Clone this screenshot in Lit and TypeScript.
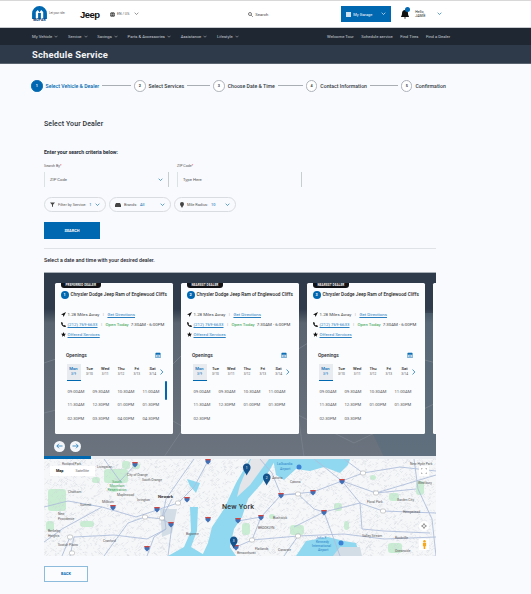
import { LitElement, html, css, svg } from "lit";
import { customElement } from "lit/decorators.js";

const chev = (c = "#fff") => html`<svg class="chev" viewBox="0 0 8 5"><path d="M1 1l3 3 3-3" fill="none" stroke=${c} stroke-width="1"/></svg>`;

function rng(seed: number) {
  let s = seed;
  return () => ((s = (s * 16807) % 2147483647) - 1) / 2147483646;
}

const W = 392, H = 97;
const water = [
  "M206 0 L192 24 L180 50 L168 68 L164 84 L158 97 L192 97 L186 88 L190 70 L198 58 L204 40 L218 24 L232 0 Z",
  "M143 20 L156 24 L152 34 L146 27 Z",
  "M146 48 L154 48 L153 72 L147 88 L162 97 L124 97 L140 88 L147 72 Z",
  "M229 0 L306 0 L304 6 L296 14 L280 8 L266 12 L252 10 L240 21 L232 16 Z",
  "M252 97 L262 82 L284 78 L300 82 L312 84 L316 97 Z",
];
const highways = [
  "M-4 86 L18 70 L58 48 L92 58 L113 51 L134 44 L150 28 L164 2", "M0 48 L24 42 L58 48", "M60 0 L76 22 L92 5",
  "M26 97 L30 78 L70 76 L103 80 L122 70 L120 55 L128 40", "M60 97 L84 64 L101 58 L118 60 L122 40 L140 14 L150 0",
  "M103 97 L110 78 L122 70", "M18 97 L26 78", "M118 60 L128 66 L124 97",
  "M194 62 L217 58 L237 36 L269 33 L298 22 L332 34 L392 16", "M208 81 L217 58",
  "M192 88 L208 81 L254 77 L300 75 L340 80 L392 78", "M237 36 L254 35 L270 50 L280 53 L296 97",
  "M250 68 L280 53 L316 44 L339 52 L392 54", "M270 0 L298 22 L316 44 L318 70 L340 72 L386 74",
  "M319 14 L298 22", "M370 0 L374 30 L388 60 L392 97", "M319 14 L356 8 L392 12", "M332 34 L372 30", "M300 0 L319 14",
  "M216 0 L228 14 L237 36", "M240 97 L254 77",
];
const greens = [[4,30,18,22],[60,10,24,14],[78,2,8,8],[2,62,8,10],[48,18,8,6],[246,66,14,10],[198,64,8,12],[290,44,8,8],[345,34,10,8],[372,22,8,14],[344,84,14,10],[36,62,14,6],[66,28,8,5],[300,62,5,9],[88,4,8,6],[326,16,6,5],[225,55,6,5]];
const iShields = [[91,5],[69,48],[113,50],[143,40],[127,65],[164,60],[164,2],[103,89],[217,58],[194,61],[237,36],[269,33],[298,22],[280,53],[192,88]];
const wShields = [[101,58],[134,44],[118,59],[26,78],[28,94],[254,35],[319,14],[339,52],[208,81],[254,77],[332,34]];

function streets() {
  const r = rng(4242);
  const out: unknown[] = [];
  for (let i = 0; i < 4500; i++) {
    const x = r() * W, y = r() * H;
    const a = r() > 0.5 ? 0.5 : -1.0;
    const l = 0.8 + r() * 1.8;
    if (x > 116 && x < 133 && y > 50 && y < 76) continue;
    out.push(svg`<line x1=${x} y1=${y} x2=${x + l} y2=${y + l * a} stroke="#cdd2da" stroke-width=".4"/>`);
  }
  return out;
}
const streetLines = streets();

const labels: [number, number, string][] = [
  [18,5,"Roxland Park"],[53,8,"Livingston"],[83,16,"City of Orange"],[98,21,"South Orange"],[24,33,"Chatham"],[36,46,"Summit"],
  [58,43,"Millburn"],[73,36,"Maplewood"],[93,41,"Irvington"],[14,55,"New"],[14,60,"Providence"],[4,72,"Berkeley"],[4,77,"Heights"],
  [14,86,"Scotch Plains"],[59,82,"Cranford"],[142,75,"Bayonne"],[228,19,"Astoria"],[246,23,"Corona"],[214,69,"BROOKLYN"],[229,59,"Bushwick"],
  [234,91,"Canarsie"],[211,90,"Flatlands"],[193,94,"Bensonhurst"],[323,43,"Floral Park"],[353,41,"Garden City"],[359,53,"Hempstead"],
  [374,24,"Westbury"],[366,5,"New Hyde Park"],[318,77,"Valley Stream"],[351,79,"Rockville"],[351,92,"Oceanside"],
];

const TIMES: string[][] = [
  ["09:00AM","09:30AM","10:30AM","11:00AM","11:30AM","12:30PM","01:00PM","01:30PM","02:30PM","03:30PM","04:00PM","04:30PM"],
  ["09:00AM","09:30AM","10:30AM","11:00AM","11:30AM","12:30PM","01:00PM","01:30PM","02:30PM"],
  ["09:00AM","09:30AM","10:30AM","11:00AM","11:30AM","12:30PM","01:00PM","01:30PM","02:30PM","03:30PM"],
];
const BADGE = ["PREFERRED DEALER", "NEAREST DEALER", "NEAREST DEALER"];
const DAYS = [["Mon","3/9"],["Tue","3/10"],["Wed","3/11"],["Thu","3/12"],["Fri","3/13"],["Sat","3/14"]];
const STEPS = ["Select Vehicle & Dealer","Select Services","Choose Date & Time","Contact Information","Confirmation"];
const NAV = ["My Vehicle","Service","Savings","Parts & Accessories","Assistance","Lifestyle"];

@customElement("app-root")
export class AppRoot extends LitElement {
  static styles = css`
    :host { display: block; width: 531px; height: 594px; overflow: hidden; background: #f9fafd; font-family: Roboto, "Noto Sans", sans-serif; color: #1f2630; }
    svg { display: block; flex: none; }
    .chev { width: 5px; height: 3.2px; }
    .top { height: 28px; background: #fff; border-top: 1px solid #d8d8d8; border-bottom: 1px solid #c8cbd0; box-sizing: border-box; display: flex; align-items: center; padding-left: 31px; }
    .mopar { width: 17px; display: flex; flex-direction: column; align-items: center; }
    .mopar span { font-size: 3.4px; font-weight: 900; color: #10447c; line-height: 3.5px; letter-spacing: .2px; }
    .tag { font-size: 2.8px; color: #555; margin: -3px 0 0 1px; width: 31px; }
    .jeep { font: 700 9.5px "Liberation Sans", sans-serif; color: #111; width: 30px; letter-spacing: -.5px; }
    .lang { display: flex; align-items: center; gap: 2px; font-size: 3.6px; color: #555; }
    .lang .chev { margin-left: 3px; }
    .search { margin-left: 109px; display: flex; align-items: center; gap: 2px; font-size: 4.2px; color: #444; width: 93px; }
    .garage { width: 50px; height: 16px; background: #0067b1; color: #fff; display: flex; align-items: center; padding: 0 5px; box-sizing: border-box; font-size: 4px; gap: 2px; }
    .garage .chev { margin-left: auto; }
    .bell { margin-left: 10px; position: relative; width: 10px; }
    .badge { position: absolute; left: 4px; top: -3px; width: 5px; height: 5px; border-radius: 50%; background: #0067b1; }
    .hello { margin-left: 4px; font-size: 3.5px; line-height: 4px; color: #222; width: 22px; }
    .nav { height: 17px; background: #1f2732; display: flex; align-items: center; padding-left: 32px; color: #c8cdd3; font-size: 4.2px; }
    .nav-left { display: flex; width: 295px; }
    .nav-item { display: flex; align-items: center; gap: 2px; margin-right: 9.7px; white-space: nowrap; }
    .nav-item .chev { width: 4px; height: 3px; }
    .nav-right { display: flex; gap: 7.500px; white-space: nowrap; }
    .title { height: 19px; background: #2e3a4a; border-bottom: 1px solid #59636f; box-sizing: border-box; padding-left: 32px; display: flex; align-items: center; color: #f2f4f6; font-size: 9.4px; font-weight: 700; letter-spacing: .2px; }
    .steps { display: flex; align-items: center; padding: 16px 0 0 31px; height: 11.5px; box-sizing: content-box; }
    .step { display: flex; align-items: center; font-size: 5.2px; font-weight: 500; white-space: nowrap; color: #333a44; }
    .num { width: 11.5px; height: 11.5px; border-radius: 50%; border: .5px solid #aeb3ba; box-sizing: border-box; display: flex; align-items: center; justify-content: center; background: #fff; font-size: 3.8px; margin-right: 3px; font-weight: 700; }
    .step.on { color: #0067b1; }
    .step.on .num { background: #0067b1; border-color: #0067b1; color: #fff; }
    .rule { height: .6px; background: #a9aeb5; margin: 0 3px; flex: none; }
    .main { padding: 0 95px 0 44px; }
    h2 { margin: 28px 0 0; font-size: 7px; font-weight: 500; line-height: 9px; color: #2a3038; letter-spacing: .1px; }
    .crit { margin: 20px 0 0; font-size: 5.1px; font-weight: 700; line-height: 7px; color: #262c35; }
    .fields { display: flex; gap: 8px; margin-top: 8.500px; }
    .field { width: 125px; }
    .lab { font-size: 3.6px; color: #555; line-height: 4px; }
    .lab b { color: #d22; font-weight: 400; }
    .box { height: 15px; margin-top: 4px; display: flex; align-items: center; justify-content: space-between; padding: 0 5px; box-sizing: border-box; font-size: 4.200px; color: #555; border-left: .5px solid #dde0e4; border-right: .5px solid #c9cdd2; }
    .pills { display: flex; gap: 3.5px; margin-top: 10px; }
    .pill { width: 61.5px; height: 15px; border: .5px solid #d9dce1; border-radius: 8px; box-sizing: border-box; display: flex; align-items: center; padding: 0 5px; gap: 3px; font-size: 3.900px; color: #555; white-space: nowrap; }
    .pill i { font-style: normal; color: #0067b1; }
    .pill .chev { margin-left: auto; }
    .btn { width: 56px; height: 17px; background: #0067b1; margin-top: 10px; color: #fff; display: flex; align-items: center; justify-content: center; font-size: 3.9px; font-weight: 700; }
    .hr { height: .8px; background: #dfe2e6; margin-top: 9px; }
    .pick { margin: 8px 0 0; font-size: 5.250px; font-weight: 500; line-height: 7px; }
    .panel { margin-top: 8.200px; height: 184px; position: relative; overflow: hidden; background: linear-gradient(#2f3b4b 0, #2f3b4b 36px, #5a6470 50px, #6a737e 100%); border-top: 1px solid #aab0b8; box-sizing: border-box; }
    .panel-art { position: absolute; inset: 0; }
    .cards { position: relative; display: flex; gap: 8px; padding: 10px 0 0 10.5px; }
    .card { flex: none; width: 118px; height: 151px; background: #fbfcfe; border-radius: 1.5px; padding: 0 6px; box-sizing: border-box; position: relative; }
    .flag { position: absolute; left: 6px; top: 0; background: #101216; color: #fff; border-radius: 0 0 3px 3px; font-size: 3.1px; font-weight: 700; height: 5px; line-height: 5px; padding: 0 5px; white-space: nowrap; letter-spacing: .1px; }
    .name { display: flex; align-items: center; gap: 2px; padding-top: 8px; font-size: 4.700px; font-weight: 500; white-space: nowrap; color: #222; }
    .dot { width: 8px; height: 8px; border-radius: 50%; background: #0067b1; color: #fff; font-size: 3.8px; font-weight: 700; display: flex; align-items: center; justify-content: center; flex: none; }
    .rows { margin-top: 13.5px; display: flex; flex-direction: column; gap: 4.800px; }
    .row { display: flex; align-items: center; height: 5px; font-size: 4.400px; color: #444; white-space: nowrap; gap: 2px; }
    .row svg { width: 5px; height: 5px; }
    .row a { color: #2a7fc0; text-decoration: underline; }
    .sep { color: #aaa; margin: 0 1.500px; }
    .row .open { color: #2d9b3e; }
    .op { display: flex; justify-content: space-between; align-items: center; padding: 0 6px 0 5.5px; margin-top: 14.5px; font-size: 4.9px; font-weight: 500; height: 7px; }
    .op svg { width: 6px; height: 6.500px; }
    .days { display: flex; padding-left: 6px; margin-top: 5.500px; align-items: flex-start; }
    .day { width: 15.800px; height: 16.7px; text-align: center; font-size: 4.200px; font-weight: 500; line-height: 4.6px; padding-top: 3px; box-sizing: border-box; color: #222; flex: none; }
    .day small { display: block; font-size: 3.200px; font-weight: 400; color: #555; line-height: 5px; }
    .day.sel { background: #e8ecf1; color: #0067b1; border-bottom: 1px solid #0067b1; width: 14px; margin-right: 1px; }
    .day.sel small { color: #0067b1; }
    .days .nx { width: 3.5px; height: 6px; margin: 5px 0 0 0; }
    .times { display: grid; grid-template-columns: repeat(4, 25px); grid-auto-rows: 13.7px; margin: 3.500px 0 0 1px; padding-left: 6px; font-size: 4.200px; color: #555; }
    .times div { display: flex; align-items: center; }
    .scroll { position: absolute; right: 6px; top: 98px; width: 1.8px; height: 19px; background: #0067b1; border-radius: 1px; }
    .arrows { position: absolute; left: 10px; top: 168px; display: flex; gap: 5px; }
    .arrow { width: 11px; height: 11px; border-radius: 50%; background: #f4f6f9; display: flex; align-items: center; justify-content: center; }
    .arrow svg { width: 7px; height: 6px; }
    .prog { height: 3px; background: #e9ecf0; }
    .prog div { width: 47px; height: 3px; background: #0067b1; }
    .map { position: relative; height: 97px; background: #f6f7f9; overflow: hidden; }
    .art { width: 392px; height: 97px; }
    .ny { position: absolute; left: 178px; top: 43px; font-size: 7.2px; font-weight: 500; color: #333; letter-spacing: .2px; }
    .tabs { position: absolute; left: 6px; top: 7px; width: 45px; height: 10px; background: #fff; display: flex; align-items: center; justify-content: space-around; font-size: 3.8px; color: #666; }
    .tabs b { color: #111; }
    .fs { position: absolute; right: 7px; top: 7px; width: 10px; height: 10px; background: #fff; display: flex; align-items: center; justify-content: center; }
    .fs svg { width: 6px; height: 6px; }
    .cmp { position: absolute; right: 7px; top: 62px; width: 10px; height: 10px; background: #fff; border-radius: 50%; display: flex; align-items: center; justify-content: center; }
    .cmp svg { width: 6px; height: 6px; }
    .peg { position: absolute; right: 7px; top: 80px; width: 10px; height: 11px; background: #fff; display: flex; align-items: center; justify-content: center; }
    .peg svg { width: 5px; height: 9px; }
    .pin { position: absolute; width: 7.500px; height: 13px; }
    .back { width: 44px; height: 16px; margin-top: 10px; border: .7px solid #8dbbdc; box-sizing: border-box; display: flex; align-items: center; justify-content: center; font-size: 3.8px; font-weight: 700; color: #0067b1; background: #fafcfe; }
  `;

  private pin(x: number, y: number, n: number) {
    return html`<svg class="pin" style="left:${x}px;top:${y}px" viewBox="0 0 8 13"><path d="M4 0a4 4 0 0 1 4 4.500c0 3-3 5-4 8.500C3 10 0 7.500 0 4.500A4 4 0 0 1 4 0z" fill="#14528c"/><text x="4" y="6" font-size="3.500" text-anchor="middle" fill="#fff" font-family="Roboto, sans-serif">${n}</text></svg>`;
  }

  private card(i: number) {
    const times = TIMES[i] ?? [];
    return html`<div class="card">
      ${i < 3 ? html`
      <div class="flag">${BADGE[i]}</div>
      <div class="name"><span class="dot">${i + 1}</span>Chrysler Dodge Jeep Ram of Englewood Cliffs</div>
      <div class="rows">
        <div class="row"><svg viewBox="0 0 10 10"><path d="M10 0L0 5l4 1 1 4z" fill="#111"/></svg><span>1.28 Miles Away</span><span class="sep">|</span><a>Get Directions</a></div>
        <div class="row"><svg viewBox="0 0 10 10"><path d="M2 0l2 3-1 1c.6 1.3 1.7 2.4 3 3l1-1 3 2-1 2C4 10 0 6 0 1z" fill="#111"/></svg><a>(212) 769-6633</a><span class="sep">|</span><span class="open">Open Today</span><span>7:30AM - 6:00PM</span></div>
        <div class="row"><svg viewBox="0 0 10 10"><path d="M5 0l1.500 3.400 3.500.3-2.700 2.300.8 3.600L5 7.700 1.900 9.600l.8-3.600L0 3.700l3.500-.3z" fill="#111"/></svg><a>Offered Services</a></div>
      </div>
      <div class="op"><span>Openings</span><svg viewBox="0 0 10 12"><path d="M1 2h8v9H1z" fill="none" stroke="#0067b1" stroke-width="1.200"/><path d="M1 2h8v3H1z" fill="#0067b1"/><path d="M3 7h4M3 9h4" stroke="#0067b1"/></svg></div>
      <div class="days">
        ${DAYS.map((d, k) => html`<div class="day ${k === 0 ? "sel" : ""}">${d[0]}<small>${d[1]}</small></div>`)}
        <svg class="nx" viewBox="0 0 4 7"><path d="M.6.6L3.300 3.500.6 6.400" fill="none" stroke="#0067b1" stroke-width=".8"/></svg>
      </div>
      <div class="times">${times.map(t => html`<div>${t}</div>`)}</div>
      ${i === 0 ? html`<div class="scroll"></div>` : ""}
      ` : ""}
    </div>`;
  }

  render() {
    return html`
      <div class="top">
        <div class="mopar">
          <svg width="15" height="13" viewBox="0 0 16 14"><path d="M0 14V8a8 8 0 0 1 16 0v6h-4V6.500L9.800 4.200 8 7 6.200 4.200 4 6.500V14z" fill="#0067b1"/><path d="M6.500 7.500h3V14h-3z" fill="#0067b1"/></svg>
          <span>MOPAR</span>
        </div>
        <div class="tag">Let your ride.</div>
        <div class="jeep">Jeep</div>
        <div class="lang">
          <svg width="5" height="5" viewBox="0 0 10 10"><circle cx="5" cy="5" r="5" fill="#444"/><path d="M0 5h10M5 0c-3 3-3 7 0 10M5 0c3 3 3 7 0 10" stroke="#fff" stroke-width=".6" fill="none"/></svg>
          EN / US ${chev("#555")}
        </div>
        <div class="search">
          <svg width="5" height="5" viewBox="0 0 10 10"><circle cx="4" cy="4" r="3" fill="none" stroke="#333" stroke-width="1.300"/><path d="M6.500 6.500L9.500 9.500" stroke="#333" stroke-width="1.300"/></svg>
          Search
        </div>
        <div class="garage">
          <svg width="5" height="5" viewBox="0 0 10 10"><path d="M0 0h10v10H0z" fill="#cfe2f2"/></svg>
          My Garage ${chev()}
        </div>
        <div class="bell">
          <svg width="8" height="9" viewBox="0 0 8 9"><path d="M4 0c2 0 3 1.500 3 3.500 0 2 1 2.500 1 3.500H0c0-1 1-1.500 1-3.500S2 0 4 0zM3 7.500h2L4 9z" fill="#111"/></svg>
          <div class="badge"></div>
        </div>
        <div class="hello">Hello,<br />JAMIE</div>
        ${chev("#0067b1")}
      </div>
      <div class="nav">
        <div class="nav-left">${NAV.map(n => html`<div class="nav-item">${n} ${chev("#c8cdd3")}</div>`)}</div>
        <div class="nav-right"><span>Welcome Tour</span><span>Schedule service</span><span>Find Tires</span><span>Find a Dealer</span></div>
      </div>
      <div class="title">Schedule Service</div>
      <div class="steps">
        ${STEPS.map((s, i) => html`
          <div class="step ${i === 0 ? "on" : ""}"><span class="num">${i + 1}</span>${s}</div>
          ${i < 4 ? html`<div class="rule" style="width:${[29, 23, 25, 28][i]}px"></div>` : ""}
        `)}
      </div>
      <div class="main">
        <h2>Select Your Dealer</h2>
        <div class="crit">Enter your search criteria below:</div>
        <div class="fields">
          <div class="field"><div class="lab">Search By<b>*</b></div><div class="box">ZIP Code ${chev("#0067b1")}</div></div>
          <div class="field"><div class="lab">ZIP Code<b>*</b></div><div class="box">Type Here</div></div>
        </div>
        <div class="pills">
          <div class="pill"><svg width="5" height="5" viewBox="0 0 10 10"><path d="M0 1h10L6 5.500V10L4 9V5.500z" fill="#444"/></svg>Filter by Service: <i>1</i> ${chev("#0067b1")}</div>
          <div class="pill"><svg width="6" height="4" viewBox="0 0 12 8"><path d="M0 4l2-4h8l2 4v4H0z" fill="#444"/></svg>Brands: <i>All</i> ${chev("#0067b1")}</div>
          <div class="pill"><svg width="4" height="6" viewBox="0 0 8 12"><path d="M4 0a4 4 0 0 1 4 4c0 3-3 5-4 8C3 9 0 7 0 4a4 4 0 0 1 4-4z" fill="#444"/></svg>Mile Radius: <i>10</i> ${chev("#0067b1")}</div>
        </div>
        <div class="btn">SEARCH</div>
        <div class="hr"></div>
        <div class="pick">Select a date and time with your desired dealer.</div>
        <div class="panel">
          <svg class="panel-art" viewBox="0 0 392 184">
            <path d="M320 40L392 40 392 184 340 184 300 100z" fill="#566b7b" opacity=".5"/>
            <path d="M0 90L60 70 120 100 160 60 200 110 280 60 392 90M0 140L80 120 150 160 230 130 310 170 392 130M120 184L170 110 176 40M240 40L260 184" fill="none" stroke="#7a838e" stroke-width=".8"/>
          </svg>
          <div class="cards">${[0, 1, 2, 3].map(i => this.card(i))}</div>
          <div class="arrows">
            <div class="arrow"><svg viewBox="0 0 14 12"><path d="M13 6H2M6 1.500L1.500 6 6 10.500" fill="none" stroke="#0067b1" stroke-width="1.400"/></svg></div>
            <div class="arrow"><svg viewBox="0 0 14 12"><path d="M1 6h11M8 1.500L12.500 6 8 10.500" fill="none" stroke="#0067b1" stroke-width="1.400"/></svg></div>
          </div>
        </div>
        <div class="prog"><div></div></div>
        <div class="map">
          <svg class="art" viewBox="0 0 392 97">
            ${greens.map(g => svg`<rect x=${g[0]} y=${g[1]} width=${g[2]} height=${g[3]} rx="3" fill="#c9edd3"/>`)}
            ${streetLines}
            <path d="M116 50 L133 50 L128 74 L118 78 Z" fill="#d3dde6"/>
            ${water.map(d => svg`<path d=${d} fill="#8fd8ef"/>`)}
            <path d="M207 0 L225 0 L206 26 L193 38 L196 26 Z" fill="#e3e5e9"/>
            <path d="M289 97 L296 88 L316 88 L318 97 Z" fill="#d3dde6"/>
            ${highways.map(d => svg`<path d=${d} fill="none" stroke="#afbedb" stroke-width=".9"/>`)}
            ${iShields.map(s => svg`<path d="M${s[0] - 2.500} ${s[1] - 2}h5v3l-2.500 2.500L${s[0] - 2.500} ${s[1] + 1}z" fill="#3f6fb5"/><rect x=${s[0] - 2.500} y=${s[1] - 2} width="5" height="1.300" fill="#d3443c"/>`)}
            ${wShields.map(s => svg`<rect x=${s[0] - 2.500} y=${s[1] - 2} width="5" height="4" rx="1.500" fill="#fff" stroke="#888" stroke-width=".4"/>`)}
            ${labels.map(l => svg`<text x=${l[0]} y=${l[1] + 1} font-size="3.300" fill="#555" font-family="Roboto, sans-serif">${l[2]}</text>`)}
            <text x="73" y="24" font-size="3.600" text-anchor="middle" fill="#3a9a5a" font-family="Roboto, sans-serif">South</text>
            <text x="73" y="28" font-size="3.600" text-anchor="middle" fill="#3a9a5a" font-family="Roboto, sans-serif">Mountain</text>
            <text x="73" y="32" font-size="3.600" text-anchor="middle" fill="#3a9a5a" font-family="Roboto, sans-serif">Reservation</text>
            <text x="114" y="39" font-size="4.400" fill="#333" font-weight="700" font-family="Roboto, sans-serif">Newark</text>
            <text x="233" y="6" font-size="3.400" fill="#2680c9" font-family="Roboto, sans-serif">LaGuardia</text>
            <text x="236" y="11" font-size="3.400" fill="#2680c9" font-family="Roboto, sans-serif">Airport</text>
            <circle cx="255" cy="8" r="2.500" fill="#3b82d6"/>
            <text x="272" y="80" font-size="3.400" fill="#2680c9" font-family="Roboto, sans-serif">John F.</text>
            <text x="272" y="84" font-size="3.400" fill="#2680c9" font-family="Roboto, sans-serif">Kennedy</text>
            <text x="268" y="88" font-size="3.400" fill="#2680c9" font-family="Roboto, sans-serif">International</text>
            <text x="274" y="92" font-size="3.400" fill="#2680c9" font-family="Roboto, sans-serif">Airport</text>
            <circle cx="297" cy="84" r="2.500" fill="#3b82d6"/>
          </svg>
          <div class="ny">New York</div>
          <div class="tabs"><b>Map</b><span>Satellite</span></div>
          <div class="fs"><svg viewBox="0 0 10 10"><path d="M0 3V0h3M7 0h3v3M10 7v3H7M3 10H0V7" fill="none" stroke="#777" stroke-width="1"/></svg></div>
          <div class="cmp"><svg viewBox="0 0 10 10"><path d="M5 0v3M5 7v3M0 5h3M7 5h3" stroke="#666"/><circle cx="5" cy="5" r="2.500" fill="none" stroke="#666"/></svg></div>
          <div class="peg"><svg viewBox="0 0 6 11"><circle cx="3" cy="1.500" r="1.500" fill="#f4a91f"/><path d="M1 3.500h4v4H4v3.500H2V7.500H1z" fill="#f4a91f"/></svg></div>
          ${this.pin(199, 4, 1)}${this.pin(219, 14, 2)}${this.pin(186, 77, 3)}
        </div>
        <div class="back">BACK</div>
      </div>
    `;
  }
}
